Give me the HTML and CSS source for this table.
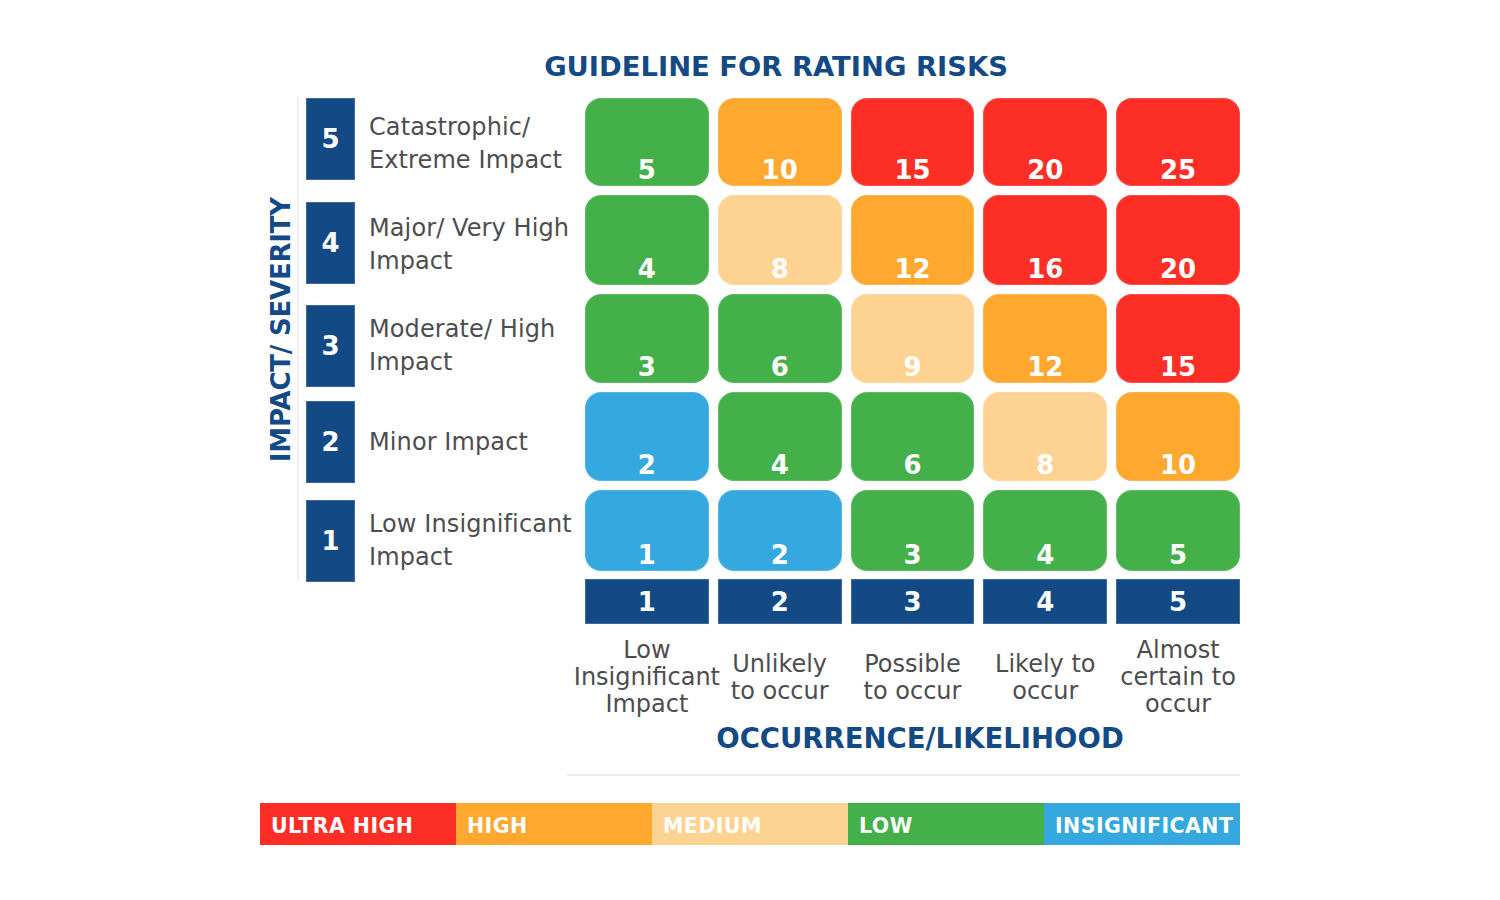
FILE: index.html
```html
<!DOCTYPE html>
<html lang="en">
<head>
<meta charset="utf-8">
<title>Guideline for Rating Risks</title>
<link rel="stylesheet" href="styles.css">
</head>
<body>
<div class="chart">
  <h1 class="title">GUIDELINE FOR RATING RISKS</h1>
  <div class="matrix-row">
    <div class="y-axis"><span class="y-label">IMPACT/ SEVERITY</span></div>
    <div class="severity">
      <div class="sev-row"><div class="sev-num">5</div><div class="sev-text">Catastrophic/<br>Extreme Impact</div></div>
      <div class="sev-row"><div class="sev-num">4</div><div class="sev-text">Major/ Very High<br>Impact</div></div>
      <div class="sev-row"><div class="sev-num">3</div><div class="sev-text">Moderate/ High<br>Impact</div></div>
      <div class="sev-row"><div class="sev-num">2</div><div class="sev-text">Minor Impact</div></div>
      <div class="sev-row"><div class="sev-num">1</div><div class="sev-text">Low Insignificant<br>Impact</div></div>
    </div>
    <div class="grid-area">
      <div class="grid">
        <div class="cell low">5</div><div class="cell high">10</div><div class="cell ultra">15</div><div class="cell ultra">20</div><div class="cell ultra">25</div>
        <div class="cell low">4</div><div class="cell medium">8</div><div class="cell high">12</div><div class="cell ultra">16</div><div class="cell ultra">20</div>
        <div class="cell low">3</div><div class="cell low">6</div><div class="cell medium">9</div><div class="cell high">12</div><div class="cell ultra">15</div>
        <div class="cell insig">2</div><div class="cell low">4</div><div class="cell low">6</div><div class="cell medium">8</div><div class="cell high">10</div>
        <div class="cell insig">1</div><div class="cell insig">2</div><div class="cell low">3</div><div class="cell low">4</div><div class="cell low">5</div>
      </div>
      <div class="x-axis">
        <div class="x-num">1</div><div class="x-num">2</div><div class="x-num">3</div><div class="x-num">4</div><div class="x-num">5</div>
      </div>
      <div class="x-labels">
        <div class="x-label">Low<br>Insignificant<br>Impact</div>
        <div class="x-label">Unlikely<br>to occur</div>
        <div class="x-label">Possible<br>to occur</div>
        <div class="x-label">Likely to<br>occur</div>
        <div class="x-label">Almost<br>certain to<br>occur</div>
      </div>
      <div class="x-title">OCCURRENCE/LIKELIHOOD</div>
    </div>
  </div>
  <div class="divider"></div>
  <div class="legend">
    <div class="legend-item ultra">ULTRA HIGH</div>
    <div class="legend-item high">HIGH</div>
    <div class="legend-item medium">MEDIUM</div>
    <div class="legend-item low">LOW</div>
    <div class="legend-item insig">INSIGNIFICANT</div>
  </div>
</div>
</body>
</html>
```

FILE: styles.css
```css
html, body {
  margin: 0;
  padding: 0;
  background: #ffffff;
}

body {
  font-family: "DejaVu Sans", "Liberation Sans", sans-serif;
  color: #4d4d4f;
}

.chart {
  width: 980px;
  margin-left: 260px;
  padding-top: 51px;
}

.title {
  margin: 0;
  padding-left: 52px;
  text-align: center;
  font-size: 27.4px;
  line-height: 32px;
  font-weight: bold;
  color: #134a85;
}

.matrix-row {
  display: flex;
  align-items: flex-start;
  margin-top: 15px;
}

.y-axis {
  width: 39px;
  height: 484px;
  margin-top: -1px;
  border-right: 2px solid #efefef;
  display: flex;
  align-items: center;
  justify-content: center;
  padding-left: 5px;
  padding-bottom: 19px;
  box-sizing: border-box;
}

.y-label {
  writing-mode: vertical-rl;
  transform: rotate(180deg);
  font-size: 26px;
  font-weight: bold;
  color: #134a85;
  white-space: nowrap;
  letter-spacing: -0.2px;
  line-height: 26px;
}

.severity {
  width: 279px;
  margin-left: 7px;
  display: grid;
  grid-template-rows: 104px 103px 96px 99px 81px;
}

.sev-row {
  display: flex;
  align-items: flex-start;
}

.sev-num {
  width: 49px;
  height: 82px;
  flex: none;
  background: #134a85;
  color: #ffffff;
  font-size: 26px;
  font-weight: bold;
  display: flex;
  align-items: center;
  justify-content: center;
  box-shadow: inset 0 0 0 1px rgba(255, 255, 255, 0.18);
}

.sev-text {
  height: 82px;
  margin-left: 14px;
  display: flex;
  align-items: center;
  font-size: 24px;
  line-height: 33px;
  white-space: nowrap;
  letter-spacing: 0.1px;
  box-sizing: border-box;
}

.sev-row:nth-child(1) .sev-text {
  padding-top: 10px;
}

.sev-row:nth-child(2) .sev-text {
  padding-top: 4px;
}

.grid-area {
  width: 655px;
}

.grid {
  display: grid;
  grid-template-columns: repeat(5, minmax(0, 1fr));
  grid-template-rows: 88px 90px 89px 89px 81px;
  gap: 9px;
}

.cell {
  border-radius: 16px;
  color: #ffffff;
  font-size: 26px;
  line-height: 26px;
  font-weight: bold;
  display: flex;
  align-items: flex-end;
  justify-content: center;
  padding-bottom: 3px;
  box-sizing: border-box;
  box-shadow: inset 0 0 0 1px rgba(255, 255, 255, 0.15);
}

.ultra { background: #fc2e25; }
.high { background: #fea82f; }
.medium { background: #fed290; }
.low { background: #43b049; }
.insig { background: #35a8df; }

.x-axis {
  display: grid;
  grid-template-columns: repeat(5, minmax(0, 1fr));
  gap: 9px;
  margin-top: 8px;
}

.x-num {
  height: 45px;
  background: #134a85;
  color: #ffffff;
  font-size: 26px;
  font-weight: bold;
  display: flex;
  align-items: center;
  justify-content: center;
  box-shadow: inset 0 0 0 1px rgba(255, 255, 255, 0.18);
}

.x-labels {
  display: grid;
  grid-template-columns: repeat(5, minmax(0, 1fr));
  gap: 9px;
  height: 81px;
  margin-top: 13px;
  align-items: center;
}

.x-label {
  text-align: center;
  font-size: 24px;
  line-height: 27px;
  white-space: nowrap;
  display: flex;
  justify-content: center;
}

.x-title {
  margin-top: 4px;
  padding-left: 15px;
  text-align: center;
  font-size: 27.5px;
  line-height: 32px;
  font-weight: bold;
  color: #134a85;
}

.divider {
  margin-top: 20px;
  margin-left: 307px;
  height: 2px;
  background: #ececec;
}

.legend {
  display: flex;
  margin-top: 27px;
  height: 42px;
}

.legend-item {
  flex: 1;
  color: #ffffff;
  font-size: 20.5px;
  font-weight: bold;
  letter-spacing: 0.45px;
  display: flex;
  align-items: center;
  padding-left: 11px;
  padding-top: 3px;
  box-sizing: border-box;
  white-space: nowrap;
}
```
